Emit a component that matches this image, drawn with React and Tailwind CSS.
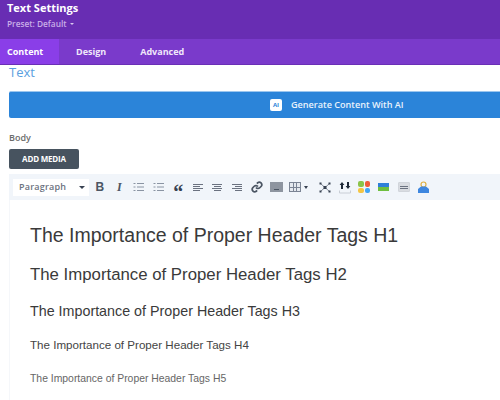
function Line({ w }) {
  return <span className={`block h-px bg-[#6b7280] ${w}`} />
}

function AlignIcon({ lines }) {
  return (
    <span className={`flex w-[10px] flex-col gap-[1px] ${lines}`}>
      <Line w="w-[10px]" />
      <Line w="w-[7px]" />
      <Line w="w-[10px]" />
      <Line w="w-[7px]" />
    </span>
  )
}

function ListIcon() {
  return (
    <svg width="11" height="10" viewBox="0 0 11 10" fill="none" stroke="#8a94a3">
      <path d="M4 1.5h7M4 5h7M4 8.5h7M0.5 1.5h2M0.5 5h2M0.5 8.5h2" />
    </svg>
  )
}

// every toolbar button sits in the same width cell
function Cell({ children }) {
  return <span className="flex w-[19.6px] items-center justify-center">{children}</span>
}

function Toolbar() {
  return (
    <div className="flex h-[26px] items-center bg-[#f1f5fa] pl-1">
      <div className="flex h-[17px] w-[76px] items-center justify-between bg-white pl-[6px] pr-1 text-[9px] font-semibold tracking-wide text-[#6b7280]">
        Paragraph
        <span className="h-0 w-0 border-x-[3px] border-t-[3px] border-x-transparent border-t-[#374151]" />
      </div>
      <div className="ml-[1px] flex items-center">
        <Cell><span className="font-['Liberation_Sans',sans-serif] text-[12px] font-bold text-[#4b5563]">B</span></Cell>
        <Cell><span className="font-['Liberation_Serif',serif] text-[12px] font-bold italic text-[#4b5563]">I</span></Cell>
        <Cell><ListIcon /></Cell>
        <Cell><ListIcon /></Cell>
        <Cell><span className="h-[11px] translate-y-[1px] font-['Liberation_Serif',serif] text-[20px] font-bold leading-[18px] text-[#374151]">“</span></Cell>
        <Cell><AlignIcon lines="items-start" /></Cell>
        <Cell><AlignIcon lines="items-center" /></Cell>
        <Cell><AlignIcon lines="items-end" /></Cell>
        <Cell>
          <svg width="12" height="12" viewBox="0 0 24 24" fill="none" stroke="#4b5563" strokeWidth="3.5">
            <path d="M10 13a5 5 0 0 0 7.5.5l3-3a5 5 0 0 0-7-7l-1.7 1.7" />
            <path d="M14 11a5 5 0 0 0-7.5-.5l-3 3a5 5 0 0 0 7 7l1.7-1.7" />
          </svg>
        </Cell>
        <Cell>
          <span className="flex h-[10px] w-[13px] items-end justify-center bg-[#8e95a0] pb-[2px]">
            <span className="block h-px w-[5px] bg-[#4b5563]" />
          </span>
        </Cell>
        <span className="flex w-[29.4px] items-center gap-[3px] pl-[3px]">
          <span className="grid h-[10px] w-[12px] grid-cols-3 gap-px border border-[#7b8494] bg-[#7b8494]">
            <span className="bg-[#e5e9ef]" /><span className="bg-[#e5e9ef]" /><span className="bg-[#e5e9ef]" />
            <span className="bg-[#e5e9ef]" /><span className="bg-[#e5e9ef]" /><span className="bg-[#e5e9ef]" />
          </span>
          <span className="h-0 w-0 border-x-[2.5px] border-t-[3px] border-x-transparent border-t-[#374151]" />
        </span>
        <Cell>
          <svg width="12" height="11" viewBox="0 0 12 11" fill="#374151" stroke="none">
            <path d="M2 2l8 7M10 2l-8 7" stroke="#6b7280" strokeWidth="0.8" />
            <rect x="0.5" y="0.5" width="2" height="2" />
            <rect x="9.5" y="0.5" width="2" height="2" />
            <rect x="0.5" y="8.5" width="2" height="2" />
            <rect x="9.5" y="8.5" width="2" height="2" />
            <rect x="4.5" y="4" width="3" height="3" />
          </svg>
        </Cell>
        <Cell>
          <svg width="12" height="13" viewBox="0 0 12 13">
            <path d="M3 1l2.4 3H4v4H2V4H0.6zM9 8L6.6 5H8V1h2v4h1.4z" fill="#1f2937" />
            <path d="M0.5 9.5v2.5h11V9.5" fill="none" stroke="#c9ced6" />
          </svg>
        </Cell>
        <Cell>
          <span className="grid h-[12px] w-[12px] grid-cols-2 gap-px">
            <span className="rounded-[2px] bg-[#8bc34a]" />
            <span className="rounded-[2px] bg-[#ef5b3a]" />
            <span className="rounded-[2px] bg-[#f4c542]" />
            <span className="rounded-[2px] bg-[#42a5f5]" />
          </span>
        </Cell>
        <Cell>
          <span className="flex w-[11px] flex-col">
            <span className="h-[4px] bg-[#2f80d8]" />
            <span className="h-[4px] bg-[#6fbf3f]" />
          </span>
        </Cell>
        <Cell>
          <span className="flex h-[10px] w-[12px] flex-col justify-center gap-px rounded-[1px] border border-[#d1d5db] bg-[#d9dce1] px-[1px]">
            <span className="h-px bg-[#6b7280]" />
            <span className="h-px bg-[#6b7280]" />
          </span>
        </Cell>
        <Cell>
          <svg width="11" height="12" viewBox="0 0 11 12">
            <circle cx="5.5" cy="3.5" r="2.5" fill="none" stroke="#e0b040" strokeWidth="1.2" />
            <path d="M0 12V8l3-2.5h5L11 8v4z" fill="#3f87df" />
          </svg>
        </Cell>
      </div>
    </div>
  )
}

export default function App() {
  return (
    <div className="h-[400px] w-[500px] overflow-hidden bg-white font-['Open_Sans',sans-serif]">
      <div className="h-[39px] bg-[#682db3] pl-[7px]">
        <div className="text-[11px] font-bold leading-[16px] text-white">Text Settings</div>
        <div className="mt-[2px] flex items-center gap-[3px] text-[8.3px] font-semibold leading-[12px] text-[#c9aee8]">
          Preset: Default
          <span className="h-0 w-0 border-x-[2px] border-t-[2px] border-x-transparent border-t-[#d8c6ee]" />
        </div>
      </div>

      <div className="flex h-[26px] border-b border-[#6a2fb5] bg-[#7a3acb] text-[9px] font-bold text-[#f0e8fa]">
        <div className="flex w-[59px] items-center bg-[#8a3ee8] pl-[7px] text-white">Content</div>
        <div className="ml-[17px] flex items-center">Design</div>
        <div className="ml-[34px] flex items-center">Advanced</div>
      </div>

      <div className="pl-[9px]">
        <div className="text-[13px] leading-[15px] text-[#5b9fe0]">Text</div>

        <div className="mt-[11px] flex h-[27px] items-center rounded-l-[2px] border-t border-[#9cc6ee] bg-[#2b84d9]">
          <span className="ml-[261px] flex h-[12px] w-[12px] items-center justify-center rounded-[2px] bg-white text-[6px] font-bold text-[#2b84d9]">AI</span>
          <span className="ml-[9px] text-[9.1px] font-semibold text-[#e8f2fc]">Generate Content With AI</span>
        </div>

        <div className="mt-[14px] text-[9px] font-semibold leading-[12px] text-[#6b6b6b]">Body</div>

        <div className="mt-[5px] flex h-[20px] w-[70px] items-center justify-center rounded-[2px] bg-[#47535f] text-[8px] font-bold tracking-tight text-white">
          ADD MEDIA
        </div>

        <div className="mt-[5px]">
          <Toolbar />
        </div>

        <div className="h-[200px] border-l border-[#f5f7fa] pl-[20px] font-['Liberation_Sans',sans-serif] text-[#3a3a3a]">
          <div className="pt-[24px] text-[19.5px] leading-[23px]">The Importance of Proper Header Tags H1</div>
          <div className="mt-[18px] text-[16.8px] leading-[20px]">The Importance of Proper Header Tags H2</div>
          <div className="mt-[18px] text-[14.3px] leading-[17px]">The Importance of Proper Header Tags H3</div>
          <div className="mt-[18px] text-[11.6px] leading-[14px] text-[#444]">The Importance of Proper Header Tags H4</div>
          <div className="mt-[21px] text-[10.4px] leading-[12px] text-[#666]">The Importance of Proper Header Tags H5</div>
        </div>
      </div>
    </div>
  )
}
